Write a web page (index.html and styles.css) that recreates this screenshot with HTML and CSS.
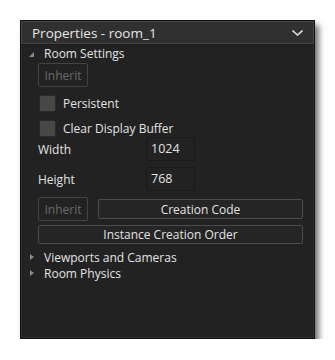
FILE: index.html
```html
<!DOCTYPE html>
<html lang="en">
<head>
    <meta charset="UTF-8">
    <title>Properties - room_1</title>
    <link rel="stylesheet" href="styles.css">
</head>
<body>
    <div class="panel">
        <div class="panel-header">
            <span>Properties - room_1</span>
            <svg class="chevron" width="11" height="6" viewBox="0 0 11 6"><path d="M0.5 0.5 L5.5 5 L10.5 0.5" fill="none" stroke="#d8d8d8" stroke-width="1.6"/></svg>
        </div>
        <div class="panel-body">
            <div class="group open">
                <span class="arrow-open"></span>
                <span>Room Settings</span>
            </div>
            <div class="row">
                <button class="btn disabled">Inherit</button>
            </div>
            <label class="check-row">
                <span class="check"></span>
                <span>Persistent</span>
            </label>
            <label class="check-row">
                <span class="check"></span>
                <span>Clear Display Buffer</span>
            </label>
            <div class="field">
                <span class="field-label">Width</span>
                <span class="input">1024</span>
            </div>
            <div class="field">
                <span class="field-label">Height</span>
                <span class="input">768</span>
            </div>
            <div class="btn-row">
                <button class="btn disabled">Inherit</button>
                <button class="btn wide">Creation Code</button>
            </div>
            <button class="btn full">Instance Creation Order</button>
            <div class="group">
                <span class="arrow-closed"></span>
                <span>Viewports and Cameras</span>
            </div>
            <div class="group">
                <span class="arrow-closed"></span>
                <span>Room Physics</span>
            </div>
        </div>
    </div>
</body>
</html>
```

FILE: styles.css
```css
body {
    margin: 0;
    background: #fff;
    font-family: 'Open Sans', 'Noto Sans', sans-serif;
    font-size: 12px;
    color: #e2e2e2;
}
.panel {
    margin: 20px 0 0 20px;
    width: 293px;
    height: 317px;
    background: #222;
    border: 1px solid #121212;
    box-shadow: 4px 5px 6px rgba(0, 0, 0, 0.55);
    display: flex;
    flex-direction: column;
}
.panel-header {
    height: 21px;
    background: #303030;
    border: 1px solid #454545;
    display: flex;
    align-items: center;
    justify-content: space-between;
    padding: 0 10px 0 10px;
    font-size: 13.5px;
    color: #e6e6e6;
}
.chevron {
    margin-top: 1px;
}
.panel-body {
    flex: 1;
    border: 1px solid #2c2c2c;
    border-top-color: #1a1a1a;
    padding: 0 10px 0 16px;
}
.group {
    display: flex;
    align-items: center;
    height: 16px;
    font-size: 12px;
    margin-left: -9px;
}
.arrow-open {
    width: 0;
    height: 0;
    border-left: 5px solid transparent;
    border-bottom: 5px solid #8a8a8a;
    margin: 2px 10px 0 0;
}
.arrow-closed {
    width: 0;
    height: 0;
    border-top: 3.5px solid transparent;
    border-bottom: 3.5px solid transparent;
    border-left: 4px solid #8a8a8a;
    margin: 0 10px 0 1px;
}
.row {
    margin-top: 2px;
}
.btn {
    font-family: inherit;
    font-size: 12px;
    color: #e2e2e2;
    background: #252525;
    border: 1px solid #4c4c4c;
    border-radius: 2px;
    padding: 0;
    height: 20px;
}
.btn.disabled {
    width: 50px;
    height: 24px;
    color: #6a6a6a;
    border-color: #444;
    background: #222;
}
.check-row {
    display: flex;
    align-items: center;
    height: 17px;
    margin-top: 8px;
    margin-left: 1px;
}
.check {
    width: 15px;
    height: 15px;
    background: #484848;
    border: 1px solid #2a2a2a;
    border-radius: 2px;
    margin-right: 7px;
}
.field {
    display: flex;
    align-items: center;
}
.field + .field {
    margin-top: 6px;
}
.field-label {
    width: 108px;
}
.input {
    width: 43px;
    height: 22px;
    line-height: 22px;
    padding-left: 4px;
    border: 1px solid #1a1a1a;
    border-radius: 2px;
    background: #222;
    font-size: 12.5px;
}
.btn-row {
    display: flex;
    align-items: center;
    gap: 10px;
    margin-top: 6px;
}
.btn.wide {
    flex: 1;
}
.btn.full {
    display: block;
    width: 100%;
    height: 19px;
    margin-top: 4px;
    margin-bottom: 5px;
}
```
